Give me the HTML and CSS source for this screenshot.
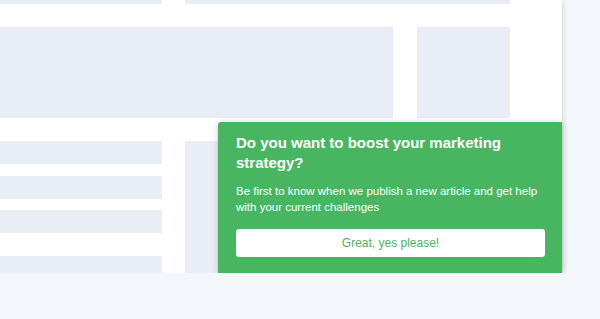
FILE: index.html
```html
<!DOCTYPE html>
<html lang="en">
<head>
    <meta charset="UTF-8">
    <meta name="viewport" content="width=device-width, initial-scale=1.0">
    <title>Newsletter</title>
    <link rel="stylesheet" href="styles.css">
</head>
<body>
    <div class="page">
        <div class="row rowTop">
            <div class="block narrow"></div>
            <div class="block wide"></div>
        </div>
        <div class="row rowHero">
            <div class="block hero"></div>
            <div class="block side"></div>
        </div>
        <div class="row rowList">
            <div class="stripes">
                <div class="block stripe"></div>
                <div class="block stripe"></div>
                <div class="block stripe spaced"></div>
                <div class="block stripe"></div>
            </div>
            <div class="block wide"></div>
        </div>

        <div class="popup">
            <h2>Do you want to boost your marketing strategy?</h2>
            <p>Be first to know when we publish a new article and get help with your current challenges</p>
            <button>Great, yes please!</button>
        </div>
    </div>
</body>
</html>
```

FILE: styles.css
```css
body {
    margin: 0;
    background: #f3f6fa;
    font-family: "Liberation Sans", Arial, sans-serif;
}

.page {
    position: relative;
    width: 562px;
    height: 273px;
    background: #ffffff;
    box-shadow: 0 1px 6px rgba(0, 0, 0, 0.18);
}

.row {
    display: flex;
    gap: 23px;
}

.block {
    background: #e9edf5;
}

.rowTop {
    height: 4px;
}

.rowHero {
    height: 91px;
    margin-top: 23px;
    gap: 24px;
}

.rowList {
    height: 132px;
    margin-top: 23px;
}

.narrow {
    width: 162px;
}

.wide {
    width: 325px;
}

.hero {
    width: 393px;
}

.side {
    width: 93px;
}

.stripes {
    width: 162px;
    display: flex;
    flex-direction: column;
    gap: 12px;
}

.stripe {
    height: 23px;
    flex-shrink: 0;
}

.stripe.spaced {
    margin-top: -1px;
}

.stripes .stripe:last-child {
    margin-top: 11px;
}

/* popup */
.popup {
    position: absolute;
    left: 218px;
    top: 122px;
    width: 344px;
    box-sizing: border-box;
    padding: 11px 17px 17px 18px;
    background: #48b561;
    border-radius: 3px 0 0 0;
    box-shadow: 0 1px 6px rgba(0, 0, 0, 0.2);
    color: #ffffff;
}

.popup h2 {
    margin: 0;
    font-size: 15px;
    line-height: 20px;
    font-weight: bold;
}

.popup p {
    margin: 10px 0 14px;
    font-size: 11.5px;
    line-height: 16px;
}

.popup button {
    display: block;
    width: 100%;
    height: 28px;
    padding: 0;
    background: #ffffff;
    color: #48b561;
    border: none;
    border-radius: 3px;
    font-family: inherit;
    font-size: 12px;
    cursor: pointer;
}
```
